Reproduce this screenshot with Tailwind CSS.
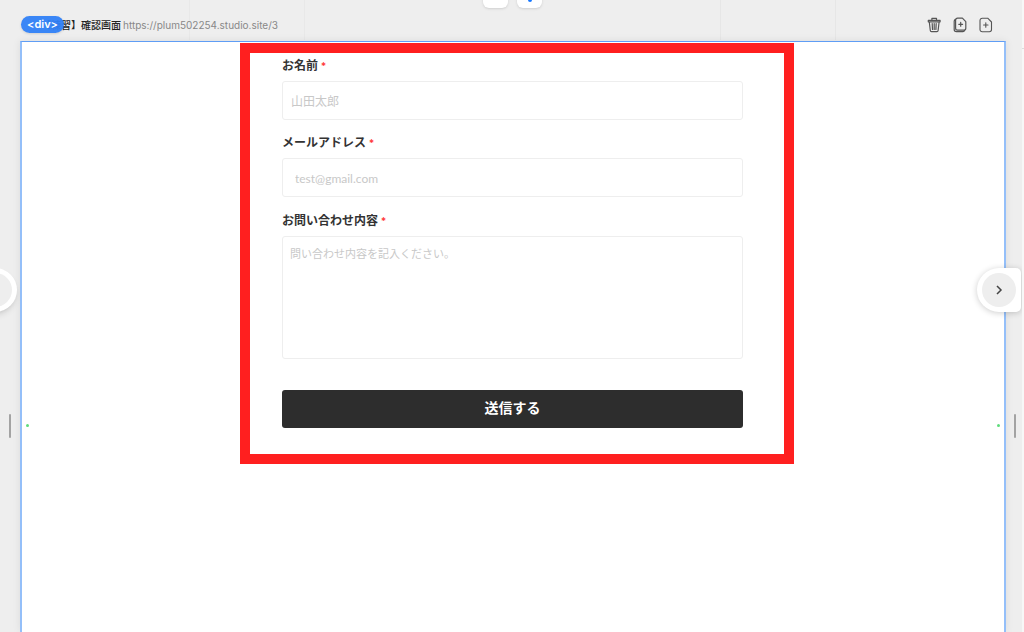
<!DOCTYPE html>
<html lang="ja">
<head>
<meta charset="utf-8">
<meta name="viewport" content="width=device-width, initial-scale=1">
<title>確認画面</title>
<script src="https://cdn.jsdelivr.net/npm/@tailwindcss/browser@4"></script>
</head>
<body class="relative flex h-screen flex-col overflow-hidden bg-[#eeeeee] font-['Inter','Noto_Sans_CJK_JP',sans-serif] text-[#333333]">
  <!-- canvas guide lines -->
  <div class="absolute left-[189px] top-0 h-10 w-px bg-[#e8e8e8]"></div>
  <div class="absolute left-[304px] top-0 h-10 w-px bg-[#e8e8e8]"></div>
  <div class="absolute left-[720px] top-0 h-10 w-px bg-[#e6e6e6]"></div>
  <div class="absolute left-[835px] top-0 h-10 w-px bg-[#e6e6e6]"></div>
  <!-- top handles -->
  <div class="absolute left-[483px] -top-4 h-6 w-[25px] rounded-md bg-white shadow"></div>
  <div class="absolute left-[517px] -top-4 flex h-6 w-[25px] items-end justify-center rounded-md bg-white pb-[6px] shadow"><span class="size-1 rounded-full bg-[#1677ff]"></span></div>

  <header class="flex h-[41px] shrink-0 items-center justify-between pl-[21px] pr-[30px] pt-2">
    <div class="relative flex items-center pl-5 text-[10px] leading-4">
      <span class="absolute left-0 -top-px flex h-[17px] w-[43px] items-center justify-center rounded-full bg-[#2f80f6]/95 text-[11px] font-semibold text-white shadow-sm">&lt;div&gt;</span>
      <h1 class="whitespace-nowrap font-medium text-[#222222]">【練習】確認画面</h1>
      <a href="https://plum502254.studio.site/3" class="ml-[2px] text-[#888888]">https://plum502254.studio.site/3</a>
    </div>
    <div class="flex items-center gap-[10px] text-[#555555]">
      <button type="button" aria-label="削除" class="size-4"><svg viewBox="0 0 16 16" class="size-4" fill="none" stroke="currentColor" stroke-width="1.2" stroke-linecap="round" stroke-linejoin="round"><path d="M2.300 3.300h11.800v1.500H2.300zM5.900 3V1.300h4.600V3M3.300 5l1 8.500a1.200 1.200 0 0 0 1.200 1.100h5.400a1.200 1.200 0 0 0 1.200-1.100L13.100 5M6.200 6.500l.3 6M8.200 6.500v6M10.200 6.500l-.3 6"/></svg></button>
      <button type="button" aria-label="複製" class="size-4"><svg viewBox="0 0 16 16" class="size-4" fill="none" stroke="currentColor" stroke-width="1.2" stroke-linecap="round" stroke-linejoin="round"><path d="M5.500 1.200h4.900l3.400 3.400v6.600a1.900 1.900 0 0 1-1.900 1.900H5.500a1.900 1.900 0 0 1-1.900-1.900V3.100a1.900 1.900 0 0 1 1.900-1.900ZM3.400 2.400A2 2 0 0 0 2.200 4.200v8.300a2.200 2.200 0 0 0 2.200 2.200h6.500a2 2 0 0 0 1.800-1.300M8.700 5.400v3.800M6.800 7.300h3.800"/></svg></button>
      <button type="button" aria-label="追加" class="size-4"><svg viewBox="0 0 16 16" class="size-4" fill="none" stroke="currentColor" stroke-width="1.1" stroke-linecap="round" stroke-linejoin="round"><path d="M4.200 1.200h5.500l3.800 3.800v7.500a2.200 2.200 0 0 1-2.200 2.200H4.200A2.200 2.200 0 0 1 2 12.500V3.400a2.200 2.200 0 0 1 2.200-2.200ZM7.800 5.800v4.400M5.600 8h4.400"/></svg></button>
    </div>
  </header>

  <main class="relative ml-5 mr-[18px] flex flex-1 items-start justify-center border-x-2 border-t border-x-[#94bff9] border-t-[#5f9df5] bg-white pl-2 pt-px shadow-[0_0_8px_rgba(0,0,0,0.08)]">
    <form class="flex w-full max-w-[554px] flex-col border-10 border-[#ff1f1f] pb-[26px] pl-8 pr-[41px] text-[12px]">
      <label for="name" class="pt-px font-bold leading-6">お名前 <span class="text-[10px] text-[#ff3b3b]">*</span></label>
      <input id="name" type="text" placeholder="山田太郎" class="mt-[3px] h-[39px] rounded-[3px] border border-[#eeeeee] px-2 pt-px placeholder:text-[#c8c8c8]">
      <label for="mail" class="mt-[10px] pt-px font-bold leading-6">メールアドレス <span class="text-[10px] text-[#ff3b3b]">*</span></label>
      <input id="mail" type="email" placeholder="test@gmail.com" class="mt-[3px] h-[39px] rounded-[3px] border border-[#eeeeee] px-3 pt-[2px] font-['Lato',sans-serif] placeholder:text-[#c8c8c8]">
      <label for="body" class="mt-[11px] pt-px font-bold leading-6">お問い合わせ内容 <span class="text-[10px] text-[#ff3b3b]">*</span></label>
      <textarea id="body" placeholder="問い合わせ内容を記入ください。" class="mt-[3px] h-[123px] resize-none rounded-[3px] border border-[#eeeeee] px-[7px] py-2 text-[11px] leading-[18px] placeholder:text-[#c8c8c8]"></textarea>
      <button type="submit" class="mt-[31px] h-[38px] rounded-[3px] bg-[#2d2d2d] pb-[3px] text-[14px] font-bold text-white">送信する</button>
    </form>
    <span class="absolute left-1 top-[382px] size-[3px] rounded-full bg-[#5fdc7c]"></span>
    <span class="absolute right-1 top-[382px] size-[3px] rounded-full bg-[#5fdc7c]"></span>
  </main>

  <!-- side panel toggles -->
  <button type="button" aria-label="左パネルを開く" class="absolute -left-[27px] top-[268px] flex size-11 items-center justify-center rounded-full bg-white shadow-md"><span class="size-[34px] rounded-full bg-[#eeeeee]"></span></button>
  <button type="button" aria-label="右パネルを開く" class="absolute right-[3px] top-[268px] flex h-11 w-11 items-center rounded-l-[22px] rounded-r-[5px] bg-white pl-[5px] shadow-[0_1px_6px_rgba(0,0,0,0.2)]">
    <span class="flex size-[34px] items-center justify-center rounded-full bg-[#eeeeee]"><svg viewBox="0 0 10 10" class="size-[10px]" fill="none" stroke="#444" stroke-width="1.500"><path d="M3 1l4 4-4 4"/></svg></span>
  </button>
  <div class="absolute left-[9px] top-[414px] h-6 w-[2px] rounded bg-[#a3a3a3]"></div>
  <div class="absolute right-2 top-[414px] h-6 w-[2px] rounded bg-[#a3a3a3]"></div>
  <div class="absolute bottom-0 right-0 top-0 w-[2px] bg-[#f7f7f7]"></div>
  <div class="absolute right-0 top-12 h-px w-[2px] bg-[#dddddd]"></div>
</body>
</html>
